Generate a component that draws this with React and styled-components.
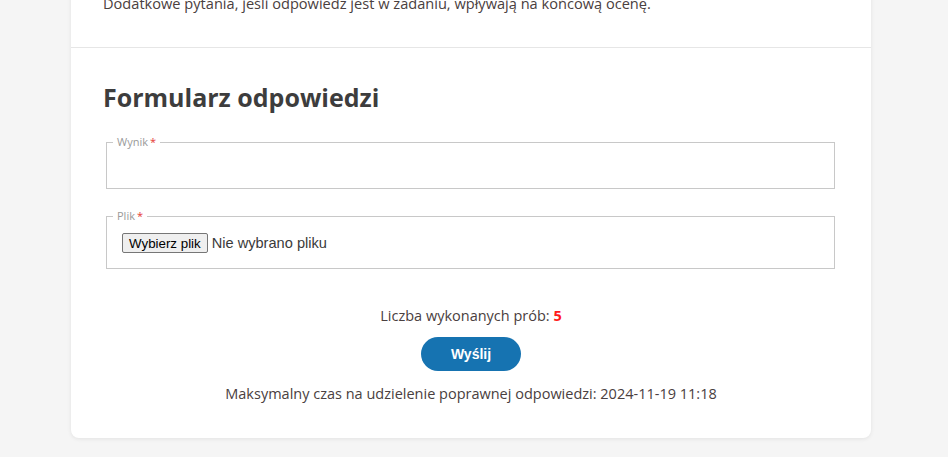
import React from 'react'
import styled, { createGlobalStyle } from 'styled-components'

const GlobalStyle = createGlobalStyle`
  html, body {
    margin: 0;
    padding: 0;
    background: #f5f5f5;
    font-family: "Open Sans", "Noto Sans", sans-serif;
    color: #444;
    overflow: hidden;
  }
`

const Page = styled.div`
  display: flex;
  padding: 0 77px 20px 71px;
  margin-top: -31px;
`

const Card = styled.div`
  width: 800px;
  background: #fff;
  border-radius: 0 0 8px 8px;
  box-shadow: 0 1px 4px rgba(0, 0, 0, 0.08);
`

const TopSection = styled.div`
  padding: 24px 32px 34px;
  border-bottom: 1px solid #e6e6e6;
`

const Note = styled.p`
  margin: 0;
  font-size: 14.6px;
  line-height: 20px;
  color: #4a4040;
`

const FormSection = styled.div`
  padding: 33px 32px 34px;
`

const Heading = styled.h2`
  margin: 0 0 22px;
  font-size: 25px;
  line-height: 32px;
  font-weight: 700;
  color: #3d3d3d;
`

const Field = styled.fieldset`
  margin: 0 4px 20px 3px;
  padding: 0 6px;
  border: 1px solid #c8c8c8;
  min-width: 0;
`

const Legend = styled.legend`
  padding: 0 4px;
  font-size: 11px;
  line-height: 14px;
  color: #9a9a9a;
`

const Star = styled.span`
  color: #e53935;
  margin-left: 2px;
`

const TextInput = styled.input`
  display: block;
  width: 100%;
  box-sizing: border-box;
  height: 39px;
  border: none;
  outline: none;
  background: transparent;
  font: inherit;
  font-size: 14px;
`

const FileRow = styled.label`
  display: flex;
  align-items: center;
  gap: 4px;
  padding: 10px 9px 15px;
  font-family: "Liberation Sans", Arial, sans-serif;
  font-size: 13.33px;
  color: #333;
`

const FileButton = styled.span`
  display: inline-flex;
  align-items: center;
  height: 20px;
  box-sizing: border-box;
  padding: 0 6px;
  background: #efefef;
  border: 1px solid #767676;
  border-radius: 2px;
  color: #000;
  font-size: 13.33px;
`

const FileStatus = styled.span`
  font-size: 14.6px;
  color: #3a3a3a;
`

const HiddenFile = styled.input`
  display: none;
`

const Footer = styled.div`
  display: flex;
  flex-direction: column;
  align-items: center;
  padding-top: 17px;
`

const Info = styled.p`
  margin: 0;
  font-size: 14.5px;
  line-height: 20px;
  color: #4a4040;
`

const Count = styled.strong`
  color: #ff1a1a;
  font-weight: 700;
`

const SubmitButton = styled.button`
  margin: 11px 0 13px;
  width: 100px;
  height: 34px;
  border: none;
  border-radius: 17px;
  background: #1673b1;
  color: #fff;
  font-family: "Liberation Sans", Arial, sans-serif;
  font-weight: 700;
  font-size: 14px;
  cursor: pointer;
`

export default function App() {
  return (
    <>
      <GlobalStyle />
      <Page>
        <Card>
          <TopSection>
            <Note>Dodatkowe pytania, jeśli odpowiedź jest w zadaniu, wpływają na końcową ocenę.</Note>
          </TopSection>
          <FormSection>
            <Heading>Formularz odpowiedzi</Heading>
            <Field>
              <Legend>Wynik<Star>*</Star></Legend>
              <TextInput type="text" />
            </Field>
            <Field>
              <Legend>Plik<Star>*</Star></Legend>
              <FileRow>
                <HiddenFile type="file" />
                <FileButton>Wybierz plik</FileButton>
                <FileStatus>Nie wybrano pliku</FileStatus>
              </FileRow>
            </Field>
            <Footer>
              <Info>Liczba wykonanych prób: <Count>5</Count></Info>
              <SubmitButton type="button">Wyślij</SubmitButton>
              <Info>Maksymalny czas na udzielenie poprawnej odpowiedzi: 2024-11-19 11:18</Info>
            </Footer>
          </FormSection>
        </Card>
      </Page>
    </>
  )
}
